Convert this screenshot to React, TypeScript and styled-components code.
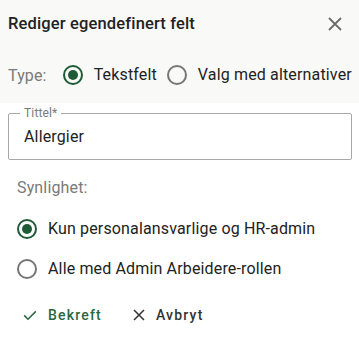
import styled, { createGlobalStyle } from "styled-components";

const GlobalStyle = createGlobalStyle`
  html, body { margin: 0; padding: 0; background: #fff; }
  body {
    font-family: Roboto, "Noto Sans", sans-serif;
    color: #212121;
    letter-spacing: 0.15px;
  }
  * { box-sizing: border-box; }
`;

const GREEN = "#1e5b36";

export default function App() {
  return (
    <>
      <GlobalStyle />
      <Dialog>
        <Top>
          <Header>
            <Title>Rediger egendefinert felt</Title>
            <CloseButton aria-label="Lukk">
              <svg width="14" height="14" viewBox="0 0 14 14">
                <path d="M1 1L13 13M13 1L1 13" stroke="#6b6b6b" strokeWidth="1.8" />
              </svg>
            </CloseButton>
          </Header>
          <TypeRow>
            <TypeLabel>Type:</TypeLabel>
            <RadioOption>
              <Radio checked />
              Tekstfelt
            </RadioOption>
            <RadioOption>
              <Radio />
              Valg med alternativer
            </RadioOption>
          </TypeRow>
        </Top>
        <Body>
          <Field>
            <FloatingLabel>Tittel*</FloatingLabel>
            <FieldValue>Allergier</FieldValue>
          </Field>
          <Section>
            <SectionLabel>Synlighet:</SectionLabel>
            <RadioList>
              <RadioOption>
                <Radio checked />
                Kun personalansvarlige og HR-admin
              </RadioOption>
              <RadioOption>
                <Radio />
                Alle med Admin Arbeidere-rollen
              </RadioOption>
            </RadioList>
          </Section>
          <Actions>
            <ActionButton tone="primary">
              <svg width="14" height="14" viewBox="0 0 14 14">
                <path d="M1.2 7.4L5 11.2L12.8 3.4" stroke="#2a6840" strokeWidth="1.6" fill="none" />
              </svg>
              Bekreft
            </ActionButton>
            <ActionButton tone="neutral">
              <svg width="12" height="12" viewBox="0 0 12 12">
                <path d="M1 1L11 11M11 1L1 11" stroke="#333" strokeWidth="1.5" />
              </svg>
              Avbryt
            </ActionButton>
          </Actions>
        </Body>
      </Dialog>
    </>
  );
}

function Radio({ checked }: { checked?: boolean }) {
  return (
    <RadioCircle checked={checked}>
      {checked && <RadioDot />}
    </RadioCircle>
  );
}

const Dialog = styled.div`
  width: 359px;
  height: 340px;
  background: #fff;
`;

const Top = styled.div`
  background: #f9f9f7;
  padding: 0 8px;
  height: 103px;
`;

const Header = styled.div`
  display: flex;
  align-items: center;
  justify-content: space-between;
  height: 48px;
`;

const Title = styled.h2`
  margin: 0;
  font-size: 16.5px;
  line-height: 20px;
  font-weight: 500;
  letter-spacing: 0.15px;
  color: #222;
`;

const CloseButton = styled.button`
  border: 0;
  background: none;
  padding: 0;
  margin-right: 9px;
  display: flex;
`;

const TypeRow = styled.div`
  display: flex;
  align-items: center;
  height: 54px;
  white-space: nowrap;
`;

const TypeLabel = styled.span`
  font-size: 16px;
  color: #7a7a7a;
  margin-right: 6px;
`;

const RadioOption = styled.label`
  display: flex;
  align-items: center;
  gap: 11px;
  font-size: 16px;
  line-height: 20px;
  color: #222;
  white-space: nowrap;
`;

const RadioCircle = styled.span<{ checked?: boolean }>`
  width: 20px;
  height: 20px;
  border-radius: 50%;
  border: 2px solid ${(p) => (p.checked ? GREEN : "#767676")};
  display: flex;
  align-items: center;
  justify-content: center;
  flex-shrink: 0;
  margin-left: 10px;
`;

const RadioDot = styled.span`
  width: 10px;
  height: 10px;
  border-radius: 50%;
  background: ${GREEN};
`;

const Body = styled.div`
  padding: 10px 7px 0 8px;
`;

const Field = styled.div`
  position: relative;
  height: 47px;
  border: 1px solid #a8a8a8;
  border-radius: 2px;
  padding: 0 15px;
  display: flex;
  align-items: center;
`;

const FloatingLabel = styled.span`
  position: absolute;
  top: -7px;
  left: 11px;
  padding: 0 4px;
  background: #fff;
  font-size: 12px;
  line-height: 12px;
  color: #7a7a7a;
`;

const FieldValue = styled.div`
  font-size: 16px;
  line-height: 20px;
  color: #222;
`;

const Section = styled.div`
  padding: 18px 0 0 9px;
`;

const SectionLabel = styled.div`
  font-size: 16px;
  line-height: 19px;
  color: #7a7a7a;
`;

const RadioList = styled.div`
  display: flex;
  flex-direction: column;
  gap: 20px;
  margin: 22px 0 0 -10px;
`;

const Actions = styled.div`
  display: flex;
  gap: 15px;
  padding: 24px 0 0 7px;
`;

const ActionButton = styled.button<{ tone: "primary" | "neutral" }>`
  border: 0;
  background: none;
  display: flex;
  align-items: center;
  gap: 11px;
  font-family: Roboto, sans-serif;
  font-size: 14px;
  line-height: 16px;
  font-weight: 500;
  letter-spacing: 1.2px;
  padding: 4px 8px;
  color: ${(p) => (p.tone === "primary" ? "#2a6840" : "#333")};
`;
